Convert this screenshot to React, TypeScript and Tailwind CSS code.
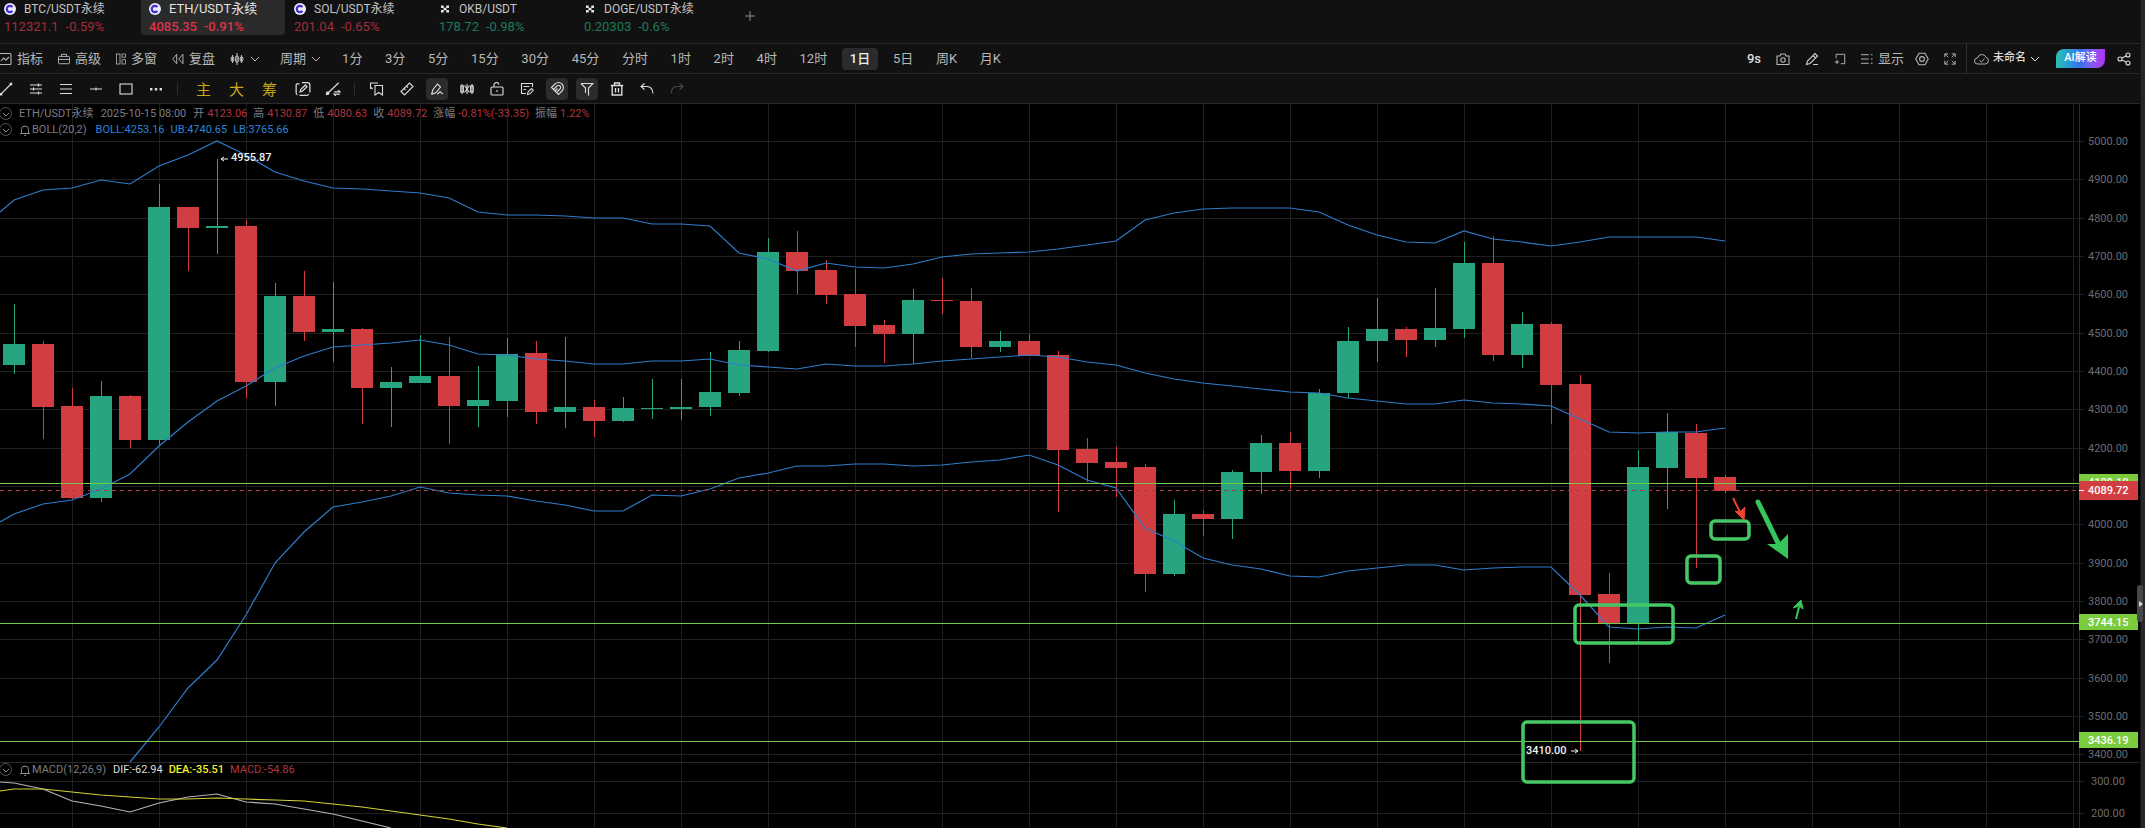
import React, { useState } from 'react';

type IconProps = { children: React.ReactNode; className?: string };

const Icon: React.FC<IconProps> = ({ children, className = 'w-3.5 h-3.5' }) => (
  <svg className={`shrink-0 ${className}`} viewBox="0 0 14 14" fill="none" stroke="currentColor" strokeWidth={1.1} aria-hidden="true">
    {children}
  </svg>
);

const Chevron = () => (
  <svg className="w-2.5 h-2.5 shrink-0" viewBox="0 0 10 10" fill="none" stroke="currentColor" aria-hidden="true">
    <path d="M1 3l4 4 4-4" />
  </svg>
);

const CoinIcon = () => (
  <svg className="w-3 h-3 shrink-0" viewBox="0 0 12 12" aria-hidden="true">
    <circle cx="6" cy="6" r="6" fill="#eceaff" />
    <path d="M8.4 4.2A3.1 3.1 0 1 0 8.4 7.8" fill="none" stroke="#3f2fd8" strokeWidth="2.2" />
  </svg>
);

const OkxIcon = () => (
  <svg className="w-3 h-3 shrink-0" viewBox="0 0 12 12" fill="#e5e5e5" aria-hidden="true">
    <path d="M2 2.500h2.700v2.400H2zM7.300 2.500H10v2.400H7.300zM4.500 4.700h3v2.600h-3zM2 7.100h2.700v2.400H2zM7.300 7.100H10v2.400H7.300z" />
  </svg>
);

const tabs = [
  { name: 'BTC/USDT永续', price: '112321.1', change: '-0.59%', up: false, okx: false },
  { name: 'ETH/USDT永续', price: '4085.35', change: '-0.91%', up: false, okx: false },
  { name: 'SOL/USDT永续', price: '201.04', change: '-0.65%', up: false, okx: false },
  { name: 'OKB/USDT', price: '178.72', change: '-0.98%', up: true, okx: true },
  { name: 'DOGE/USDT永续', price: '0.20303', change: '-0.6%', up: true, okx: true },
];

const periods = ['1分', '3分', '5分', '15分', '30分', '45分', '分时', '1时', '2时', '4时', '12时', '1日', '5日', '周K', '月K'];

const STEP = 29;
const cx = (i: number) => 14 + Math.round(i * 29.007);

// [body top, body bottom, wick top, wick bottom, rising]
const candles: [number, number, number, number, number][] = [
  [344, 365, 304, 374, 1], [344, 407, 341, 439, 0], [406, 498, 388, 499, 0], [396, 498, 381, 502, 1],
  [396, 440, 395, 448, 0], [207, 440, 184, 446, 1], [207, 228, 207, 271, 0], [226, 228, 159, 254, 1],
  [226, 382, 220, 398, 0], [296, 382, 283, 406, 1], [296, 332, 271, 341, 0], [329, 332, 282, 362, 1],
  [329, 388, 328, 424, 0], [382, 388, 367, 427, 1], [376, 383, 335, 383, 1], [376, 406, 337, 444, 0],
  [400, 406, 366, 427, 1], [354, 401, 338, 417, 1], [353, 412, 341, 424, 0], [407, 412, 337, 428, 1],
  [407, 421, 400, 437, 0], [408, 421, 397, 422, 1], [408, 409, 379, 419, 1], [407, 409, 379, 420, 1],
  [392, 407, 352, 416, 1], [350, 393, 341, 396, 1], [252, 351, 238, 352, 1], [252, 271, 231, 294, 0],
  [270, 295, 260, 304, 0], [294, 326, 269, 347, 0], [325, 334, 320, 363, 0], [300, 334, 289, 364, 1],
  [300, 301, 278, 314, 0], [301, 347, 288, 358, 0], [341, 347, 331, 352, 1], [341, 356, 334, 356, 0],
  [355, 450, 351, 512, 0], [449, 463, 438, 482, 0], [462, 468, 446, 497, 0], [467, 574, 464, 592, 0],
  [514, 574, 500, 576, 1], [514, 519, 510, 536, 0], [472, 519, 470, 539, 1], [443, 472, 435, 494, 1],
  [443, 471, 432, 489, 0], [393, 471, 389, 478, 1], [341, 393, 327, 398, 1], [329, 341, 298, 362, 1],
  [329, 340, 327, 357, 0], [328, 340, 288, 347, 1], [263, 329, 242, 338, 1], [263, 355, 236, 361, 0],
  [324, 355, 312, 368, 1], [324, 385, 322, 424, 0], [384, 595, 375, 751, 0], [594, 624, 573, 663, 0],
  [467, 624, 450, 642, 1], [432, 468, 413, 509, 1], [433, 478, 424, 568, 0], [477, 491, 475, 493, 0],
];

const upper = [
  200, 190, 188, 180, 184, 166, 155, 141, 155, 172, 181, 188, 189, 191, 193, 198, 212, 215, 215, 216,
  218, 218, 224, 224, 226, 253, 259, 271, 263, 267, 268, 264, 257, 254, 253, 252, 249, 245, 241, 220,
  213, 209, 208, 208, 208, 212, 225, 235, 242, 243, 231, 239, 242, 246, 242, 237, 237, 237, 237, 241,
];
const middle = [
  514, 504, 500, 489, 474, 446, 422, 401, 386, 368, 356, 347, 345, 343, 340, 345, 354, 355, 359, 361,
  364, 364, 361, 361, 359, 365, 367, 369, 364, 366, 366, 364, 361, 359, 357, 355, 357, 362, 365, 373,
  379, 383, 386, 389, 392, 393, 398, 401, 404, 404, 400, 403, 404, 406, 419, 432, 433, 432, 432, 428,
];
// starts at the fifth candle, where the band enters the pane
const lower = [
  762, 727, 688, 660, 615, 563, 532, 507, 502, 496, 487, 493, 495, 496, 501, 505, 511, 511, 495, 496,
  489, 478, 473, 466, 466, 464, 464, 466, 465, 462, 460, 455, 465, 480, 488, 528, 541, 558, 565, 569,
  576, 577, 571, 568, 565, 565, 570, 568, 567, 567, 595, 627, 629, 627, 628, 615,
];
const dif = [783, 789, 801, 806, 812, 803, 797, 794, 802, 804, 809, 814, 821, 828];
const dea = [789, 789, 792, 795, 797, 799, 799, 798, 799, 800, 801, 804, 807, 811, 815, 819, 824, 828];

const toPoints = (ys: number[], from = 0) => ys.map((y, i) => `${cx(i + from)},${y}`).join(' ');

const priceY = (p: number) => Math.round(141 + (5000 - p) * 0.3834) + 0.5;
const gridPrices = Array.from({ length: 17 }, (_, i) => 5000 - i * 100);
const gridColumns = Array.from({ length: 24 }, (_, i) => cx(2 + i * 3) + 0.5);

const levels = [
  { y: 483, label: '4109.10' },
  { y: 623, label: '3744.15' },
  { y: 741, label: '3436.19' },
];

const boxes = [
  { x: 1711, y: 521, w: 38, h: 18 },
  { x: 1687, y: 556, w: 33, h: 27 },
  { x: 1575, y: 605, w: 98, h: 38 },
  { x: 1523, y: 722, w: 111, h: 60 },
];

const Chart: React.FC = () => (
  <svg
    className="block w-full h-auto bg-black"
    viewBox="0 104 2140 724"
    fontFamily="Roboto, 'Noto Sans CJK SC', sans-serif"
    fontSize="11"
    role="img"
    aria-label="ETH/USDT永续 1日"
  >
    {/* grid */}
    <g stroke="#1f1f20" shapeRendering="crispEdges">
      {gridPrices.map((p) => (
        <line key={p} x1="0" x2="2084" y1={priceY(p)} y2={priceY(p)} />
      ))}
      <path d="M0 781.5H2084M0 813.5H2084" />
      {gridColumns.map((x) => (
        <line key={x} x1={x} x2={x} y1="104" y2="828" />
      ))}
      <path d="M2079.5 104V828" stroke="#2a2a2c" />
      <path d="M0 762.5H2139" stroke="#2a2a2c" />
    </g>

    {/* candles */}
    {candles.map(([top, bottom, high, low, up], i) => (
      <g key={i} fill={up ? '#26a580' : '#d13d40'} shapeRendering="crispEdges">
        <rect x={cx(i)} y={high} width="1" height={low - high} />
        <rect x={cx(i) - (STEP - 7) / 2} y={top} width={STEP - 7} height={bottom - top} />
      </g>
    ))}

    {/* bollinger bands */}
    <g fill="none" stroke="#2f7ccb" strokeWidth="1.2">
      <polyline points={`0,212 ${toPoints(upper)}`} />
      <polyline points={`0,522 ${toPoints(middle)}`} />
      <polyline points={toPoints(lower, 4)} />
    </g>

    {/* macd */}
    <g fill="none" strokeWidth="1.2">
      <polyline points={`0,782 ${toPoints(dif)}`} stroke="#b4b4b4" />
      <polyline points={`0,791 ${toPoints(dea)}`} stroke="#d0d03a" />
    </g>

    {/* price lines */}
    <g shapeRendering="crispEdges">
      {levels.map((l) => (
        <line key={l.y} x1="0" x2="2079" y1={l.y + 0.5} y2={l.y + 0.5} stroke="#72c848" />
      ))}
      <line x1="0" x2="2079" y1="490.5" y2="490.5" stroke="#a83a3c" strokeDasharray="4 4" />
    </g>

    {/* drawn boxes and arrows */}
    <g fill="none" stroke="#45c765" strokeWidth="3.5">
      {boxes.map((b) => (
        <rect key={b.x} x={b.x} y={b.y} width={b.w} height={b.h} rx="4" />
      ))}
    </g>
    <path d="M1758 502L1779 545" stroke="#35c65b" strokeWidth="5" strokeLinecap="round" />
    <path d="M1788 559L1767 544 1778 544 1788 534z" fill="#35c65b" />
    <path d="M1733 498L1741 514" stroke="#f0442c" strokeWidth="2" />
    <path d="M1744 520L1735 511 1740 512 1745 507z" fill="#f0442c" stroke="#f0442c" strokeWidth="1" />
    <path d="M1796 619L1799 607" stroke="#35c65b" strokeWidth="2" />
    <path d="M1801 600L1793 608 1799 606 1803 609z" fill="#35c65b" stroke="#35c65b" strokeWidth="1" />

    {/* extremes */}
    <g fill="#f2f2f2" fontWeight="500">
      <text x="231" y="161">4955.87</text>
      <path d="M228 159H221M224 157l-3 2 3 2" fill="none" stroke="#f2f2f2" />
      <text x="1526" y="754">3410.00</text>
      <path d="M1571 751H1578M1575 749l3 2-3 2" fill="none" stroke="#f2f2f2" />
    </g>

    {/* price axis */}
    <g fill="#6a6b70">
      {gridPrices.filter((p) => p !== 4100).map((p) => (
        <text key={p} x="2088" y={priceY(p) + 3.5}>{p.toFixed(2)}</text>
      ))}
      <text x="2091" y="785">300.00</text>
      <text x="2091" y="817">200.00</text>
    </g>
    {levels.map((l) => (
      <g key={l.y}>
        <rect x="2079" y={l.y - 9} width="59" height="16" fill="#7acb3d" />
        <text x="2088" y={l.y + 3} fill="#fff" fontWeight="500">{l.label}</text>
      </g>
    ))}
    <rect x="2079" y="481" width="59" height="19" fill="#d13d40" />
    <path d="M2079 490.5h5" stroke="#fff" />
    <text x="2088" y="494" fill="#fff" fontWeight="500">4089.72</text>
  </svg>
);

const ToolButton: React.FC<{ label: string; active?: boolean; dim?: boolean; children: React.ReactNode }> = ({ label, active, dim, children }) => (
  <button
    aria-label={label}
    className={`w-[22px] h-[22px] shrink-0 flex items-center justify-center rounded-sm ${active ? 'bg-[#2b2b2b]' : ''} ${dim ? 'text-[#4a4a4a]' : 'text-[#dcdcdc]'}`}
  >
    {children}
  </button>
);

const Collapse = () => (
  <button aria-label="收起" className="-ml-px w-[13px] h-[13px] rounded-full border border-[#55565a] flex items-center justify-center text-[#8a8b90]">
    <svg className="w-2 h-2" viewBox="0 0 8 8" fill="none" stroke="currentColor"><path d="M1 3l3 3 3-3" /></svg>
  </button>
);

const Bell = () => (
  <svg className="w-3 h-3 shrink-0" viewBox="0 0 12 12" fill="none" stroke="#8a8b90">
    <path d="M1 9.5h10M2.5 9.5V5.5a3.5 3.5 0 0 1 7 0v4M5 11.3h2" />
  </svg>
);

const quote = [
  ['开', '4123.06'], ['高', '4130.87'], ['低', '4080.63'], ['收', '4089.72'],
  ['涨幅', '-0.81%(-33.35)'], ['振幅', '1.22%'],
];

const App: React.FC = () => {
  const [pair, setPair] = useState(1);
  const [period, setPeriod] = useState('1日');

  return (
    <div className="flex h-screen w-full overflow-hidden bg-black text-[#b8b8b8] font-[Roboto,'Noto_Sans_CJK_SC',sans-serif]">
      <main className="flex-1 min-w-0 flex flex-col">
        {/* Pairs */}
        <header className="h-11 shrink-0 bg-[#111111] border-b border-[#2a2a2a] flex items-start">
          <div className="-ml-1 flex gap-px">
            {tabs.map((t, i) => (
              <button
                key={t.name}
                onClick={() => setPair(i)}
                className={`w-36 h-[35px] px-2 rounded-b-sm text-left ${pair === i ? 'bg-[#2a2a2a]' : ''}`}
              >
                <span className={`flex items-center gap-2 h-[18px] whitespace-nowrap ${pair === i ? 'text-[13px] text-[#e2e2e2]' : 'text-xs text-[#c4c4c4]'}`}>
                  {t.okx ? <OkxIcon /> : <CoinIcon />}
                  {t.name}
                </span>
                <span className={`flex gap-[7px] text-[13px] leading-[17px] ${t.up ? 'text-[#1c7a5a]' : pair === i ? 'text-[#dd3348] font-medium' : 'text-[#a32c3f]'}`}>
                  <span>{t.price}</span>
                  <span>{t.change}</span>
                </span>
              </button>
            ))}
          </div>
          <button aria-label="添加" className="ml-5 mt-1.5 w-5 h-5 flex items-center justify-center text-[#8c8c8c]">
            <svg className="w-2.5 h-2.5" viewBox="0 0 10 10" stroke="currentColor"><path d="M5 0v10M0 5h10" /></svg>
          </button>
        </header>

        {/* Periods */}
        <nav className="h-[30px] shrink-0 bg-[#111111] border-b border-[#2a2a2a] flex items-center text-[13px] whitespace-nowrap">
          <div className="-ml-0.5 flex items-center gap-[15px]">
            <button className="flex items-center gap-[5px]">
              <Icon><rect x="1" y="1.5" width="12" height="11" rx="1" /><path d="M3 9l2.5-3 2.5 2 3-3" /></Icon>指标
            </button>
            <button className="flex items-center gap-[5px]">
              <Icon className="w-3 h-3.5"><rect x="0.6" y="4" width="12.8" height="8.5" rx="1" /><path d="M4 4V1.5h6V4M0.6 7.5h12.8" /></Icon>高级
            </button>
            <button className="flex items-center gap-[5px]">
              <Icon className="w-2.5 h-3.5"><rect x="0.6" y="0" width="5" height="14" /><rect x="8.4" y="0" width="5" height="4.5" /><rect x="8.4" y="8" width="5" height="6" /></Icon>多窗
            </button>
            <button className="flex items-center gap-[5px]">
              <Icon className="w-3 h-3.5"><path d="M5.5 1.5v11L.8 7zM12.8 1.5v11L8 7z" /></Icon>复盘
            </button>
          </div>
          <button aria-label="K线样式" className="ml-[15px] flex items-center gap-1.5">
            <Icon><path d="M2.5 3v8M7 1v12M11.5 3v8" /><rect x="1.2" y="5" width="2.6" height="4" rx="1" /><rect x="5.7" y="4" width="2.6" height="6" rx="1" /><rect x="10.2" y="5" width="2.6" height="4" rx="1" /></Icon>
            <Chevron />
          </button>
          <button className="ml-5 flex items-center gap-[5px]">周期<Chevron /></button>
          <div className="ml-[13px] w-[675px] shrink-0 flex justify-between">
            {periods.map((p) => (
              <button
                key={p}
                onClick={() => setPeriod(p)}
                className={`px-2 h-[22px] leading-[22px] rounded-sm ${period === p ? 'bg-[#2b2b2b] text-[#f0f0f0] font-medium' : ''}`}
              >
                {p}
              </button>
            ))}
          </div>

          <div className="ml-auto h-full flex items-center">
            <div className="flex items-center gap-[15px] pr-2.5">
              <span className="text-[#dcdcdc] font-medium">9s</span>
              <button aria-label="截图"><Icon><path d="M1 4h3l1-2h4l1 2h3v8.5H1z" /><circle cx="7" cy="8" r="2.2" /></Icon></button>
              <button aria-label="画笔" className="text-[#d0d0d0]"><Icon><path d="M1.5 12.5l1-3.5L10 1.5l2.5 2.5L5 11.5zM8 3.5L10.5 6M8 12.5h5" /></Icon></button>
              <button aria-label="弹出"><Icon className="w-3 h-3"><path d="M2.500 6V1.500h10v11H8M1 10.500h5M3.500 8v5" /></Icon></button>
              <button className="flex items-center gap-[5px]">
                <Icon className="w-3 h-3"><path d="M0 2h9M0 7h9M0 12h9M11.5 2h2M11.5 7h2M11.5 12h2" /></Icon>显示
              </button>
              <button aria-label="设置" className="-ml-1"><Icon><path d="M4 1.2h6L13.2 7 10 12.8H4L.8 7z" /><circle cx="7" cy="7" r="2.4" /></Icon></button>
              <button aria-label="全屏"><Icon className="w-3 h-3"><path d="M1 5V1h4M9 1h4v4M13 9v4H9M5 13H1V9M1 1l4 4M13 1L9 5M13 13L9 9M1 13l4-4" /></Icon></button>
            </div>
            <div className="h-full border-l border-[#2f2f2f] pl-[7px] pr-[9px] flex items-center">
              <button className="flex items-center gap-1 text-[11px] font-medium text-[#dcdcdc]">
                <svg className="w-[15px] h-3 shrink-0" viewBox="0 0 15 12" fill="none" stroke="#b0b0b0"><path d="M3.5 11a3 3 0 0 1 0-6A4.5 4.5 0 0 1 12 4.2 3.5 3.5 0 0 1 11.500 11zM5.500 7.500l2 1.500 3-3.500" /></svg>
                未命名
                <Chevron />
              </button>
              <button className="ml-4 w-[49px] h-[19px] rounded-tl-lg rounded-br-lg bg-linear-to-r from-[#2fc0b4] via-[#3470ee] to-[#b32cf5] text-[11px] font-medium text-white">AI解读</button>
              <button aria-label="分享" className="ml-3 text-[#dcdcdc]">
                <Icon><circle cx="3" cy="7" r="2" /><circle cx="11" cy="3" r="2" /><circle cx="11" cy="11" r="2" /><path d="M5 6l4-2M5 8l4 2" /></Icon>
              </button>
            </div>
          </div>
        </nav>

        {/* Drawing tools */}
        <div className="h-[30px] shrink-0 bg-[#111111] border-b border-[#2a2a2a] flex items-center">
          <div className="-ml-[5px] flex gap-2">
            <ToolButton label="线段"><Icon><path d="M2 12L12 2" /><path d="M.8 11h2.400v2.400H.8zM10.800.8h2.400v2.400h-2.400z" fill="currentColor" stroke="none" /></Icon></ToolButton>
            <ToolButton label="斐波那契"><Icon><path d="M1 3h12M1 7h12M1 11h12M9.500 1.500v3M4.500 5.500v3M9.500 9.500v3" /></Icon></ToolButton>
            <ToolButton label="平行线"><Icon><path d="M1 2.500h12M1 7h12M1 11.500h12" /></Icon></ToolButton>
            <ToolButton label="水平线"><Icon><path d="M1 7h12M7 5.500v3" /></Icon></ToolButton>
            <ToolButton label="矩形"><Icon><rect x="1" y="2" width="12" height="10" /></Icon></ToolButton>
            <ToolButton label="更多"><Icon><path d="M1 6h2.400v2.400H1zM5.800 6h2.400v2.400H5.800zM10.600 6H13v2.400h-2.400z" fill="currentColor" stroke="none" /></Icon></ToolButton>
          </div>
          <div className="ml-2.5 w-px h-3 bg-[#2f2f2f]" />
          <div className="ml-[18px] mt-0.5 flex gap-[18px] text-[15px] leading-5 text-[#c9a818]">
            <button>主</button>
            <button>大</button>
            <button>筹</button>
          </div>
          <div className="ml-[15px] flex gap-2">
            <ToolButton label="复盘编辑"><Icon className="w-4 h-4"><path d="M4 2.500H2a1 1 0 0 0-1 1V10a2 2 0 0 0 1 2M6 1.500h5a2 2 0 0 1 2 2V10M4 12.500h6a2 2 0 0 0 2-1M4.500 9.500l.5-2 4-4 1.500 1.500-4 4z" /></Icon></ToolButton>
            <ToolButton label="切换画线"><Icon className="w-4 h-4"><path d="M1 12L12 1.500M3 10a1 1 0 1 0 .1.1M8 9.500h5l-1.500-1.500M13 11.500H8l1.500 1.500" /></Icon></ToolButton>
          </div>
          <div className="ml-2.5 w-px h-3 bg-[#2f2f2f]" />
          <div className="ml-[11px] flex gap-2">
            <ToolButton label="书签"><Icon><path d="M5 3.500h7.500V13L8.800 10.500 5 13zM.5 7V1H8M.5 5l2 2" /></Icon></ToolButton>
            <ToolButton label="测量"><Icon><path d="M1 9.500L9.500 1 13 4.500 4.500 13zM4 6.500l1.500 1.500M6.500 4L8 5.500" /></Icon></ToolButton>
            <ToolButton label="涂鸦" active><Icon><path d="M1.500 12.500l1.500-5 4.500-5.500 3 3L6 10.500l-4.500 2M7 11.500c2 1 2-2.500 3.500-1.500s.5 2 2.500 1.500" /></Icon></ToolButton>
            <ToolButton label="K线"><Icon><path d="M2 2v10M12 2v10M7 2v10" /><rect x=".8" y="4" width="2.600" height="6" /><path d="M4.500 3.500l5 7M4.500 10.500l5-7" /><rect x="10.600" y="4" width="2.600" height="6" /></Icon></ToolButton>
            <ToolButton label="锁定"><Icon><rect x="1" y="5" width="12" height="8" rx="1" /><path d="M4 5V3.500a2.500 2.500 0 0 1 5-.8M7 8v2" /></Icon></ToolButton>
            <ToolButton label="备注"><Icon><path d="M12.500 5V1.500h-11v10H6M3.500 4.500h6M3.500 7.500H6M7.500 12.500l.5-2.500 3.500-3.500 1.800 1.800L10 11.800z" /></Icon></ToolButton>
            <ToolButton label="磁铁" active><Icon><path d="M1.500 5.500L5 2a5 5 0 0 1 7 0 5 5 0 0 1 0 7l-3.500 3.500-2-2L10 7a2 2 0 0 0-3-3L3.500 7.500zM3.500 7.500L5 9l2.500-2.500M5 9l1.500 1.500" /></Icon></ToolButton>
            <ToolButton label="筛选" active><Icon><path d="M1 1.500h12L8.500 6v7.500M1 1.500L5.500 6v5" /></Icon></ToolButton>
            <ToolButton label="删除"><Icon><path d="M.8 3.500h12.400M2.200 3.500v9.500h9.600V3.500M4.500 3.500V1h5v2.500M5.500 6v4.500M8.500 6v4.500" strokeWidth="1.400" /></Icon></ToolButton>
            <ToolButton label="撤销"><Icon><path d="M4.500 1.500l-3.500 3 3.500 3M1 4.500h6c3.500 0 5.500 2 6 7" /></Icon></ToolButton>
            <ToolButton label="重做" dim><Icon><path d="M9.500 1.500l3.500 3-3.500 3M13 4.500H7c-3.500 0-5.500 2-6 7" /></Icon></ToolButton>
          </div>
        </div>

        {/* Chart */}
        <section className="relative text-[11px] leading-[17px] whitespace-nowrap text-[#7d7e83]">
          <Chart />
          <div className="absolute left-0 top-px flex items-center gap-[7px]">
            <Collapse />
            <span>ETH/USDT永续</span>
            <span>2025-10-15 08:00</span>
            <span className="flex gap-1.5">
              {quote.map(([k, v]) => (
                <span key={k} className="flex gap-[3px]">{k}<span className="text-[#b03540]">{v}</span></span>
              ))}
            </span>
          </div>
          <div className="absolute left-0 top-[17px] flex items-center gap-[7px]">
            <Collapse />
            <span className="flex items-center gap-px"><Bell />BOLL(20,2)</span>
            <span className="flex gap-1.5 pl-0.5 text-[#2b84d8]">
              <span>BOLL:4253.16</span>
              <span>UB:4740.65</span>
              <span>LB:3765.66</span>
            </span>
          </div>
          <div className="absolute left-0 top-[657px] flex items-center gap-[7px]">
            <Collapse />
            <span className="flex items-center gap-px"><Bell />MACD(12,26,9)</span>
            <span className="flex gap-1.5">
              <span className="text-[#dcdcdc]">DIF:-62.94</span>
              <span className="text-[#f0f02c] font-medium">DEA:-35.51</span>
              <span className="text-[#b03540]">MACD:-54.86</span>
            </span>
          </div>
        </section>
      </main>

      {/* Side panel handle */}
      <aside className="relative w-[5px] shrink-0 bg-[#262626] border-l border-[#151515]">
        <button aria-label="展开侧栏" className="absolute right-0.5 top-[585px] w-1.5 h-[37px] rounded-sm bg-[#474747] flex items-center justify-end">
          <svg className="w-1 h-1.5" viewBox="0 0 4 6" fill="#d8d8d8"><path d="M0 0l4 3-4 3z" /></svg>
        </button>
      </aside>
    </div>
  );
};

export default App;
